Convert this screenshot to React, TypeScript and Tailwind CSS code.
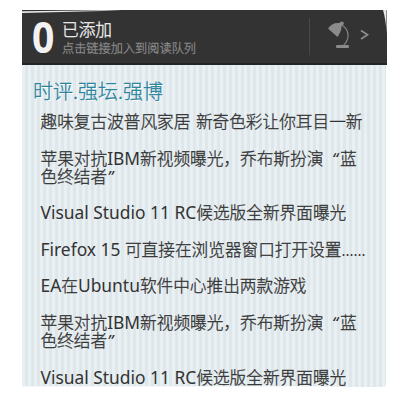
import React from "react";

const cjk = "font-['Noto_Sans_CJK_SC',sans-serif] font-light [-webkit-text-stroke:0.3px_currentColor]";

function Lamp() {
  return (
    <svg width="22" height="28" viewBox="0 0 22 28" fill="none">
      <path d="M0 7.500C2.500 3.500 6.500 1.500 11 2L12.800 0.900C14.500-.5 17 2 15.200 3.700L13.500 5.500C13.500 9 12 12.500 9.500 15.900Z" fill="#8b8b8b" />
      <path d="M14.500 4.500C22 9.500 21.500 18.500 15.500 24.500" stroke="#858585" strokeWidth="1.200" />
      <rect x="8" y="24" width="13" height="3" rx="1.300" fill="#8b8b8b" />
    </svg>
  );
}

function En({ children }: { children: string }) {
  return (
    <span className="font-['Noto_Sans',sans-serif] text-[17.400px] font-normal leading-none [-webkit-text-stroke:0px]">
      {children}
    </span>
  );
}

function Row({ children }: { children: React.ReactNode }) {
  return <li className="mb-[18.280px] whitespace-pre">{children}</li>;
}

function Line({ children }: { children: React.ReactNode }) {
  return <div className="h-[18.280px]">{children}</div>;
}

function AppleRow() {
  return (
    <Row>
      <Line>
        苹果对抗<En>IBM</En>新视频曝光，乔布斯扮演
        <span className="inline-block w-[16.67px] pr-[2px] text-right font-['Noto_Sans'] font-normal italic leading-none [-webkit-text-stroke:0px]">“</span>蓝
      </Line>
      <Line>色终结者<span className="font-['Noto_Sans'] font-normal italic leading-none [-webkit-text-stroke:0px]">”</span></Line>
    </Row>
  );
}

function StudioRow() {
  return (
    <Row>
      <Line><En>Visual Studio 11 RC</En>候选版全新界面曝光</Line>
    </Row>
  );
}

export default function App() {
  return (
    <div className={`h-[404px] w-[405px] overflow-hidden bg-white pl-[22px] pt-[10px] ${cjk}`}>
      <div className="relative w-[365px]">
        <header className="flex h-[55px] border-b-2 border-[#202525] bg-[#333]">
          <div className="w-[40px] pl-[10px] pt-[3px] font-['Open_Sans'] text-[43px] font-bold leading-[47px] text-[#f2f2f2] [-webkit-text-stroke:0px]">
            <span className="inline-block origin-left scale-x-[0.91]">0</span>
          </div>
          <div className="w-[247px] pt-[8px] text-[#f4f4f4]">
            <div className="text-[16.67px] leading-[22px]">已添加</div>
            <div className="text-[12.200px] leading-[16px] text-[#8c8c8c]">点击链接加入到阅读队列</div>
          </div>
          <div className="mt-2 h-[37px] w-px bg-[#484848]" />
          <div className="ml-[18px] mt-[11px]"><Lamp /></div>
          <svg className="ml-[10px] mt-[18px]" width="10" height="14" viewBox="0 0 10 14" fill="none">
            <path d="M1 2.500L7.500 6.800L1 11.100" stroke="#8b8b8b" strokeWidth="1.800" />
          </svg>
        </header>
        <main className="h-[322px] w-[364px] overflow-hidden rounded-br-[3px] bg-[repeating-linear-gradient(90deg,#e9f0f3_0px,#e9f0f3_3px,#dfe7ea_3px,#dfe7ea_6px)]">
          <h1 className="pl-[11px] pt-[12px] text-[20px] leading-[28px] text-[#2c839d] [text-shadow:1px_1px_0_#fff]">时评.强坛.强博</h1>
          <ul className="pl-[18.500px] pt-[7px] text-[16.67px] leading-[18.280px] text-[#333]">
            <Row><Line>趣味复古波普风家居<span className="inline-block w-[5.500px]"> </span>新奇色彩让你耳目一新</Line></Row>
            <AppleRow />
            <StudioRow />
            <Row>
              <Line>
                <En>Firefox 15 </En>可直接在浏览器窗口打开设置
                <span className="font-['Noto_Sans'] text-[15px] font-normal leading-none [-webkit-text-stroke:0px]">......</span>
              </Line>
            </Row>
            <Row><Line><En>EA</En>在<En>Ubuntu</En>软件中心推出两款游戏</Line></Row>
            <AppleRow />
            <StudioRow />
          </ul>
        </main>
        <svg className="pointer-events-none absolute left-0 top-0" width="365" height="380" viewBox="0 0 365 380">
          <path d="M0 1.300L100 0L80 1L30 2.300L0 3Z" fill="#e8e8e8" />
          <path d="M361 0H364.500V24Q364 10 361 0Z" fill="#e8e8e8" />
          <path d="M0 376.200H300L320 377L0 378Z" fill="#fff" fillOpacity=".8" />
        </svg>
      </div>
    </div>
  );
}
